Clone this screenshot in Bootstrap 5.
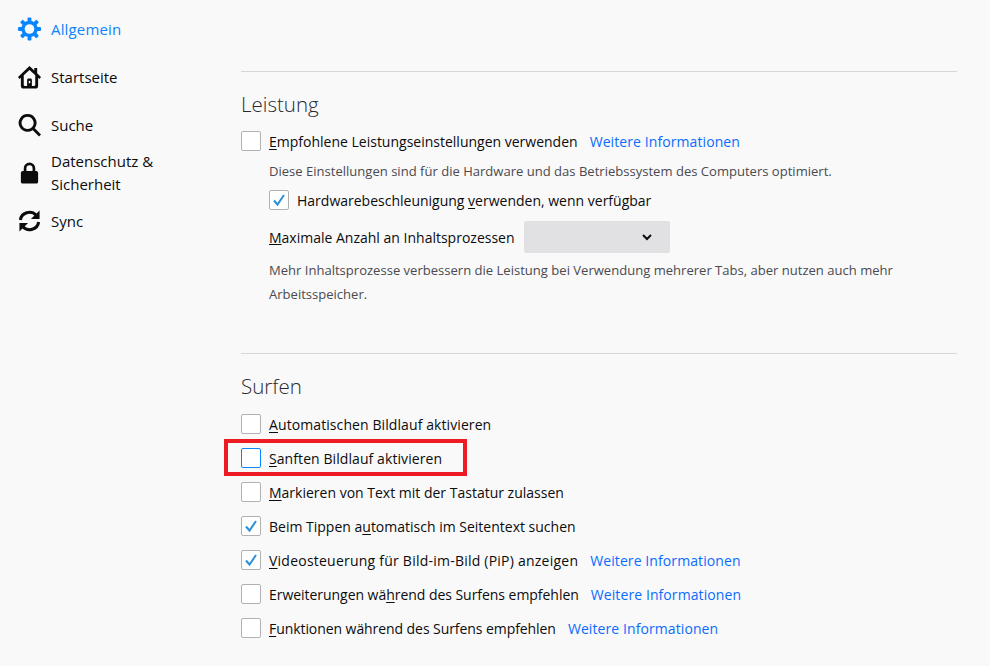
<!doctype html>
<html lang="de"><head><meta charset="utf-8"><title>Einstellungen</title>
<link href="https://cdn.jsdelivr.net/npm/bootstrap@5.3.0/dist/css/bootstrap.min.css" rel="stylesheet">
<style>
html,body{height:100%}
body{background:#f9f9fa;color:#0c0c0d;font-family:"Open Sans","Noto Sans",sans-serif;font-size:14px;overflow:hidden}
.shell{height:666px;overflow:hidden}
.side{width:241px;flex:none;padding-top:5px}
.side-item{display:flex;align-items:center;padding-left:18px;height:48px;font-size:15px;gap:10px;color:#0c0c0d}
.side-item.on{color:#0a84ff;letter-spacing:.15px}
.side-item.two{height:46px;line-height:23px;margin-top:1px}
.side-item.sy{height:50px}
.side-item svg{width:23px;height:24px;flex:none}
.main{width:716px;flex:none}
.rule{border-top:1px solid #d7d7db;margin:0}
.rule.r1{margin-top:71px}
.rule.r2{margin-top:47px}
.sec-title{font-size:20.5px;font-weight:300;line-height:28px;margin:0;color:#2a2a2e}
.t1{margin-top:18px;margin-bottom:6px}
.t2{margin-top:18px;margin-bottom:7px}
.opt{display:flex;align-items:center;height:34px;gap:8px;position:relative;white-space:nowrap}
.opt.first{margin-top:6px}
.box{width:20px;height:20px;flex:none;background:#fff;border:1px solid #b1b1b3;border-radius:2px;display:flex;align-items:center;justify-content:center}
.box.foc{border-color:#0a84ff}
.box svg{width:14px;height:14px}
.opt u{text-underline-offset:2px}
.more{color:#0a6cff;margin-left:4px;text-decoration:none;letter-spacing:.09px}
.sub{padding-left:28px}
.hint{font-size:13.05px;color:#4a4a4f;line-height:24px;margin-top:1px}
.selrow{height:40px}
.drop{width:146px;height:32px;background:#e1e1e3;border-radius:2px;display:flex;align-items:center;justify-content:flex-end;padding-right:18px;margin-left:1px}
.mark-red{position:absolute;left:-17px;top:-2px;width:243px;height:37px;border:4px solid #ed1c24;pointer-events:none}
.ls-a{letter-spacing:.09px}
.ls-s{letter-spacing:.08px}
.ls-v{letter-spacing:.23px}
.ls-e{letter-spacing:-.04px}
.ls-f{letter-spacing:-.07px}
</style></head><body>
<div class="shell d-flex">
<nav class="side">
<div class="side-item on"><svg viewBox="0 0 24 24"><g fill="#0a84ff"><rect x="10" y="0" width="4" height="24" rx="1"/><rect x="10" y="0" width="4" height="24" rx="1" transform="rotate(45 12 12)"/><rect x="10" y="0" width="4" height="24" rx="1" transform="rotate(90 12 12)"/><rect x="10" y="0" width="4" height="24" rx="1" transform="rotate(135 12 12)"/></g><circle cx="12" cy="12" r="8.600" fill="#0a84ff"/><circle cx="12" cy="12" r="5" fill="#f9f9fa"/></svg><span>Allgemein</span></div>
<div class="side-item"><svg viewBox="0 0 24 24"><path fill="#0c0c0d" fill-rule="evenodd" d="M12 .500 0 12l1.500 2L3 12.700V21a3 3 0 0 0 3 3h12a3 3 0 0 0 3-3v-8.300l1.500 1.300 1.500-2-4-3.800V2.500h-3v2.800zM12 4.700l6 5.500V20a1.500 1.500 0 0 1-1.500 1.500h-2V15a1.500 1.500 0 0 0-1.500-1.500h-2A1.500 1.500 0 0 0 9.500 15v6.500h-2A1.500 1.500 0 0 1 6 20v-9.800z"/><rect x="11.200" y="16" width="1.600" height="2.500" fill="#f9f9fa"/></svg><span>Startseite</span></div>
<div class="side-item"><svg viewBox="0 0 24 24"><path fill="none" stroke="#0c0c0d" stroke-width="3" d="M10 2a7.800 7.800 0 1 0 .01 0zM15.500 15.500l7.500 7.500"/></svg><span>Suche</span></div>
<div class="side-item two"><svg viewBox="0 0 24 24"><path fill="#0c0c0d" fill-rule="evenodd" d="M6 10V7a6 6 0 0 1 12 0v3h1a2 2 0 0 1 2 2v9a2 2 0 0 1-2 2H5a2 2 0 0 1-2-2v-9a2 2 0 0 1 2-2zM8.800 10h6.400V7a3.200 3.200 0 0 0-6.400 0z"/></svg><span>Datenschutz &amp;<br>Sicherheit</span></div>
<div class="side-item sy"><svg viewBox="0 0 24 24"><path fill="none" stroke="#0c0c0d" stroke-width="3.200" d="M2.500 11A9.500 9 0 0 1 19 6M21.500 13A9.500 9 0 0 1 5 18"/><path fill="#0c0c0d" d="M22.500 1v9h-9zM1.500 23v-9h9z"/></svg><span>Sync</span></div>
</nav>
<main class="main">
<div class="rule r1"></div>
<h2 class="sec-title t1">Leistung</h2>
<div class="opt first"><span class="box"></span><span><u>E</u>mpfohlene Leistungseinstellungen verwenden</span><a class="more" href="#">Weitere Informationen</a></div>
<div class="hint sub">Diese Einstellungen sind für die Hardware und das Betriebssystem des Computers optimiert.</div>
<div class="sub"><div class="opt"><span class="box"><svg viewBox="0 0 14 14"><path fill="none" stroke="#2a90d9" stroke-width="2" d="M2 7.500 5.500 11.500 12 2"/></svg></span><span>Hardwarebeschleunigung <u>v</u>erwenden, wenn verfügbar</span></div></div>
<div class="sub selrow d-flex align-items-center gap-2"><span><u>M</u>aximale Anzahl an Inhaltsprozessen</span><span class="drop"><svg width="10" height="7" viewBox="0 0 10 7"><path fill="none" stroke="#0c0c0d" stroke-width="2" d="M1 1l4 4 4-4"/></svg></span></div>
<div class="hint sub">Mehr Inhaltsprozesse verbessern die Leistung bei Verwendung mehrerer Tabs, aber nutzen auch mehr<br>Arbeitsspeicher.</div>
<div class="rule r2"></div>
<h2 class="sec-title t2">Surfen</h2>
<div class="opt"><span class="box"></span><span class="ls-a"><u>A</u>utomatischen Bildlauf aktivieren</span></div>
<div class="opt"><span class="box foc"></span><span class="ls-s"><u>S</u>anften Bildlauf aktivieren</span><span class="mark-red"></span></div>
<div class="opt"><span class="box"></span><span><u>M</u>arkieren von Text mit der Tastatur zulassen</span></div>
<div class="opt"><span class="box"><svg viewBox="0 0 14 14"><path fill="none" stroke="#2a90d9" stroke-width="2" d="M2 7.500 5.500 11.500 12 2"/></svg></span><span>Beim Tippen a<u>u</u>tomatisch im Seitentext suchen</span></div>
<div class="opt"><span class="box"><svg viewBox="0 0 14 14"><path fill="none" stroke="#2a90d9" stroke-width="2" d="M2 7.500 5.500 11.500 12 2"/></svg></span><span class="ls-v"><u>V</u>ideosteuerung für Bild-im-Bild (PiP) anzeigen</span><a class="more" href="#">Weitere Informationen</a></div>
<div class="opt"><span class="box"></span><span class="ls-e">Erweiterungen wä<u>h</u>rend des Surfens empfehlen</span><a class="more" href="#">Weitere Informationen</a></div>
<div class="opt"><span class="box"></span><span class="ls-f"><u>F</u>unktionen während des Surfens empfehlen</span><a class="more" href="#">Weitere Informationen</a></div>
</main>
</div>
</body></html>
